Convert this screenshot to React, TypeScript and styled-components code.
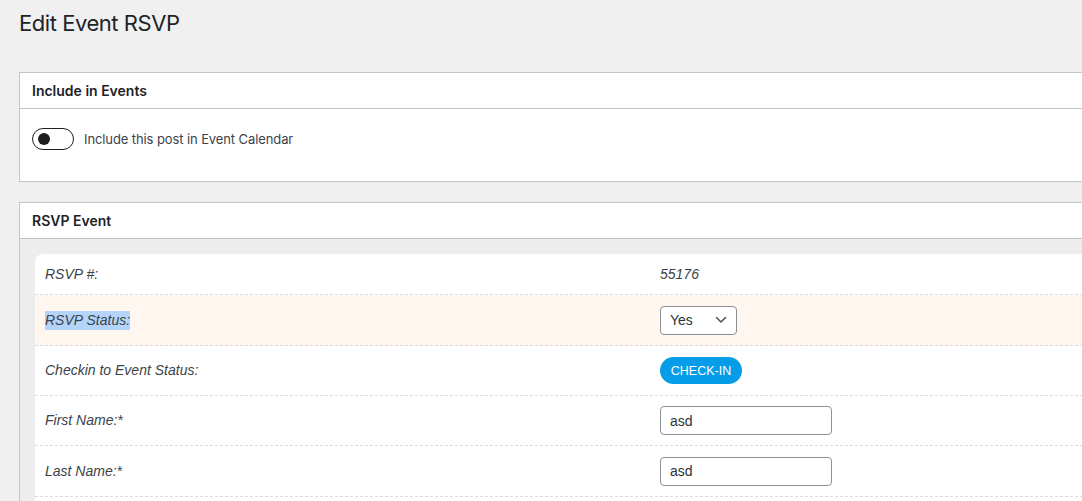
import styled, { createGlobalStyle } from 'styled-components';

const GlobalStyle = createGlobalStyle`
  html, body {
    margin: 0;
    padding: 0;
    background: #f0f0f1;
    overflow: hidden;
  }
  body {
    font-family: Inter, "Liberation Sans", sans-serif;
    color: #1d2327;
  }
`;

const Wrap = styled.div`
  padding: 0 0 0 19px;
  width: 1200px;
`;

const PageTitle = styled.h1`
  margin: 0;
  padding: 9px 0 0;
  font-size: 22px;
  font-weight: 400;
  letter-spacing: -0.45px;
  line-height: 29px;
  color: #1d2327;
  height: 63px;
`;

const Postbox = styled.section`
  background: #fff;
  border: 1px solid #c3c4c7;
  margin-bottom: 20px;
`;

const PostboxHeader = styled.div`
  height: 35px;
  display: flex;
  align-items: center;
  padding: 0 12px;
  border-bottom: 1px solid #c3c4c7;
  font-size: 14px;
  font-weight: 600;
  color: #1d2327;
`;

const ToggleBody = styled.div`
  height: 72px;
  padding: 19px 12px 0;
  box-sizing: border-box;
  display: flex;
  align-items: flex-start;
  gap: 10px;
  font-size: 13px;
  letter-spacing: -0.1px;
  color: #3c434a;
  line-height: 22px;
`;

const Toggle = styled.span`
  width: 42px;
  height: 22px;
  box-sizing: border-box;
  border: 1.5px solid #1e1e1e;
  border-radius: 11px;
  background: #fff;
  display: flex;
  align-items: center;
  padding-left: 5px;

  &::before {
    content: '';
    width: 12px;
    height: 12px;
    border-radius: 50%;
    background: #1e1e1e;
  }
`;

const MetaBody = styled.div`
  background: #ededed;
  padding: 15px 0 0 15px;
`;

const Card = styled.div`
  background: #fff;
  border-top-left-radius: 8px;
  padding-bottom: 20px;
  font-family: "Liberation Sans", Arial, sans-serif;
`;

// row height excludes the dashed separator below it
const Row = styled.div<{ $h: number; $hl?: boolean }>`
  display: grid;
  grid-template-columns: 615px 1fr;
  align-items: center;
  height: ${p => p.$h}px;
  padding-left: 10px;
  background: ${p => (p.$hl ? '#fef6ef' : 'transparent')};
  border-bottom: 1px dashed #dcdcde;
`;

const Label = styled.span<{ $sel?: boolean }>`
  font-style: italic;
  font-size: 14px;
  color: #3c434a;
  justify-self: start;
  background: ${p => (p.$sel ? '#b4d5f9' : 'transparent')};
  line-height: 19px;
`;

const Value = styled.span`
  font-style: italic;
  font-size: 14px;
  color: #3c434a;
`;

const Select = styled.div`
  width: 77px;
  height: 29px;
  box-sizing: border-box;
  border: 1px solid #8c8f94;
  border-radius: 4px;
  background: #fff;
  display: flex;
  align-items: center;
  justify-content: space-between;
  padding: 0 9px;
  font-size: 14px;
  color: #2c3338;
`;

const CheckIn = styled.button`
  width: 82px;
  height: 27px;
  border: 0;
  border-radius: 14px;
  background: #069de8;
  color: #fff;
  font-family: "Liberation Sans", Arial, sans-serif;
  font-size: 12.5px;
  font-weight: 400;
  padding: 0;
  cursor: pointer;
`;

const TextInput = styled.input`
  width: 172px;
  height: 29px;
  box-sizing: border-box;
  border: 1px solid #8c8f94;
  border-radius: 4px;
  padding: 0 9px;
  font-family: "Liberation Sans", Arial, sans-serif;
  font-size: 14px;
  color: #2c3338;
  outline: none;
`;

const Chevron = () => (
  <svg width="12" height="8" viewBox="0 0 12 8" fill="none">
    <path d="M1.5 1.5 6 6l4.5-4.5" stroke="#50575e" strokeWidth="1.6" strokeLinecap="round" strokeLinejoin="round" />
  </svg>
);

export default function App() {
  return (
    <Wrap>
      <GlobalStyle />
      <PageTitle>Edit Event RSVP</PageTitle>

      <Postbox>
        <PostboxHeader>Include in Events</PostboxHeader>
        <ToggleBody>
          <Toggle />
          <span>Include this post in Event Calendar</span>
        </ToggleBody>
      </Postbox>

      <Postbox>
        <PostboxHeader>RSVP Event</PostboxHeader>
        <MetaBody>
          <Card>
            <Row $h={40}>
              <Label>RSVP #:</Label>
              <Value>55176</Value>
            </Row>
            <Row $h={50} $hl>
              <Label $sel>RSVP Status:</Label>
              <Select>
                <span>Yes</span>
                <Chevron />
              </Select>
            </Row>
            <Row $h={49}>
              <Label>Checkin to Event Status:</Label>
              <div>
                <CheckIn>CHECK-IN</CheckIn>
              </div>
            </Row>
            <Row $h={49}>
              <Label>First Name:*</Label>
              <div>
                <TextInput defaultValue="asd" />
              </div>
            </Row>
            <Row $h={50}>
              <Label>Last Name:*</Label>
              <div>
                <TextInput defaultValue="asd" />
              </div>
            </Row>
          </Card>
        </MetaBody>
      </Postbox>
    </Wrap>
  );
}
